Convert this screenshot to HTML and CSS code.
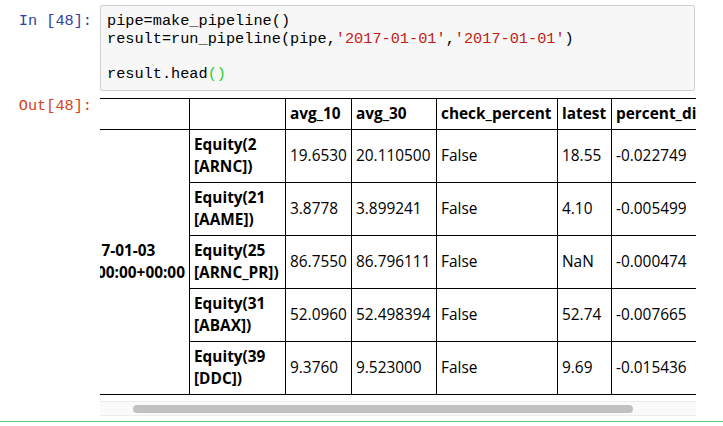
FILE: index.html
```html
<!DOCTYPE html>
<html>
<head>
<meta charset="utf-8">
<link rel="stylesheet" href="styles.css">
</head>
<body>
<div class="cell">
  <div class="row input-row">
    <div class="prompt in-prompt">In&nbsp;[48]:</div>
    <div class="input-area">
      <div class="code-line">pipe=make_pipeline()</div>
      <div class="code-line">result=run_pipeline(pipe,<span class="str">'2017-01-01'</span>,<span class="str">'2017-01-01'</span>)</div>
      <div class="code-line">&nbsp;</div>
      <div class="code-line">result.head<span class="bracket">()</span></div>
    </div>
  </div>
  <div class="row output-row">
    <div class="prompt out-prompt">Out[48]:</div>
    <div class="output-area">
      <div class="scroller">
        <table class="df">
          <colgroup>
            <col class="c0"><col class="c1"><col class="c2"><col class="c3"><col class="c4"><col class="c5"><col class="c6">
          </colgroup>
          <thead>
            <tr><th></th><th></th><th>avg_10</th><th>avg_30</th><th>check_percent</th><th>latest</th><th>percent_diff</th></tr>
          </thead>
          <tbody>
            <tr><th rowspan="5" class="lvl0">2017-01-03<br>00:00:00+00:00</th><th>Equity(2<br>[ARNC])</th><td>19.6530</td><td>20.110500</td><td>False</td><td>18.55</td><td>-0.022749</td></tr>
            <tr><th>Equity(21<br>[AAME])</th><td>3.8778</td><td>3.899241</td><td>False</td><td>4.10</td><td>-0.005499</td></tr>
            <tr><th>Equity(25<br>[ARNC_PR])</th><td>86.7550</td><td>86.796111</td><td>False</td><td>NaN</td><td>-0.000474</td></tr>
            <tr><th>Equity(31<br>[ABAX])</th><td>52.0960</td><td>52.498394</td><td>False</td><td>52.74</td><td>-0.007665</td></tr>
            <tr><th>Equity(39<br>[DDC])</th><td>9.3760</td><td>9.523000</td><td>False</td><td>9.69</td><td>-0.015436</td></tr>
          </tbody>
        </table>
      </div>
      <div class="scrollbar"><div class="thumb"></div></div>
    </div>
  </div>
</div>
<div class="next-cell"></div>
</body>
</html>
```
FILE: styles.css
```css
html, body {
  margin: 0;
  padding: 0;
  background: #ffffff;
}
.cell {
  padding-top: 5px;
  width: 723px;
}
.row {
  display: flex;
  align-items: flex-start;
}
.prompt {
  width: 100px;
  box-sizing: border-box;
  padding-right: 8px;
  text-align: right;
  font-family: "Liberation Mono", monospace;
  font-size: 15.25px;
  line-height: 17.5px;
  white-space: nowrap;
}
.in-prompt {
  color: #303f9f;
  padding-top: 8px;
}
.out-prompt {
  color: #d84315;
  padding-top: 0px;
}
.input-area {
  width: 595px;
  box-sizing: border-box;
  border: 1px solid #cfcfcf;
  border-radius: 2px;
  background: #f7f7f7;
  padding: 7px 6px;
  font-family: "Liberation Mono", monospace;
  font-size: 15.25px;
  line-height: 17.5px;
  color: #000;
}
.code-line {
  white-space: pre;
}
.str {
  color: #c41a16;
}
.bracket {
  color: #1fd11f;
}
.output-row {
  margin-top: 7px;
}
.output-area {
  width: 596px;
}
.scroller {
  overflow: hidden;
  width: 596px;
}
.df {
  margin-left: -30px;
  border-collapse: collapse;
  table-layout: fixed;
  width: 645px;
  font-family: "Open Sans", sans-serif;
  font-size: 15.4px;
  line-height: 22px;
  color: #000;
}
.df th, .df td {
  border: 1px solid #000;
  padding: 4px;
  text-align: left;
  vertical-align: middle;
  white-space: nowrap;
}
.df th {
  font-weight: bold;
}
.c0 { width: 119px; }
.c1 { width: 96px; }
.c2 { width: 66px; }
.c3 { width: 85px; }
.c4 { width: 121px; }
.c5 { width: 54px; }
.c6 { width: 104px; }
.scrollbar {
  margin-top: 6px;
  height: 15px;
  box-sizing: border-box;
  border-top: 1px solid #ececec;
  border-bottom: 1px solid #ececec;
  background: #fafafa;
  display: flex;
  align-items: center;
}
.thumb {
  margin-left: 33px;
  width: 500px;
  height: 8px;
  border-radius: 4px;
  background: #c1c1c1;
}
.next-cell {
  margin-top: 5px;
  border-top: 1px solid #5dc97e;
  width: 723px;
}
```
